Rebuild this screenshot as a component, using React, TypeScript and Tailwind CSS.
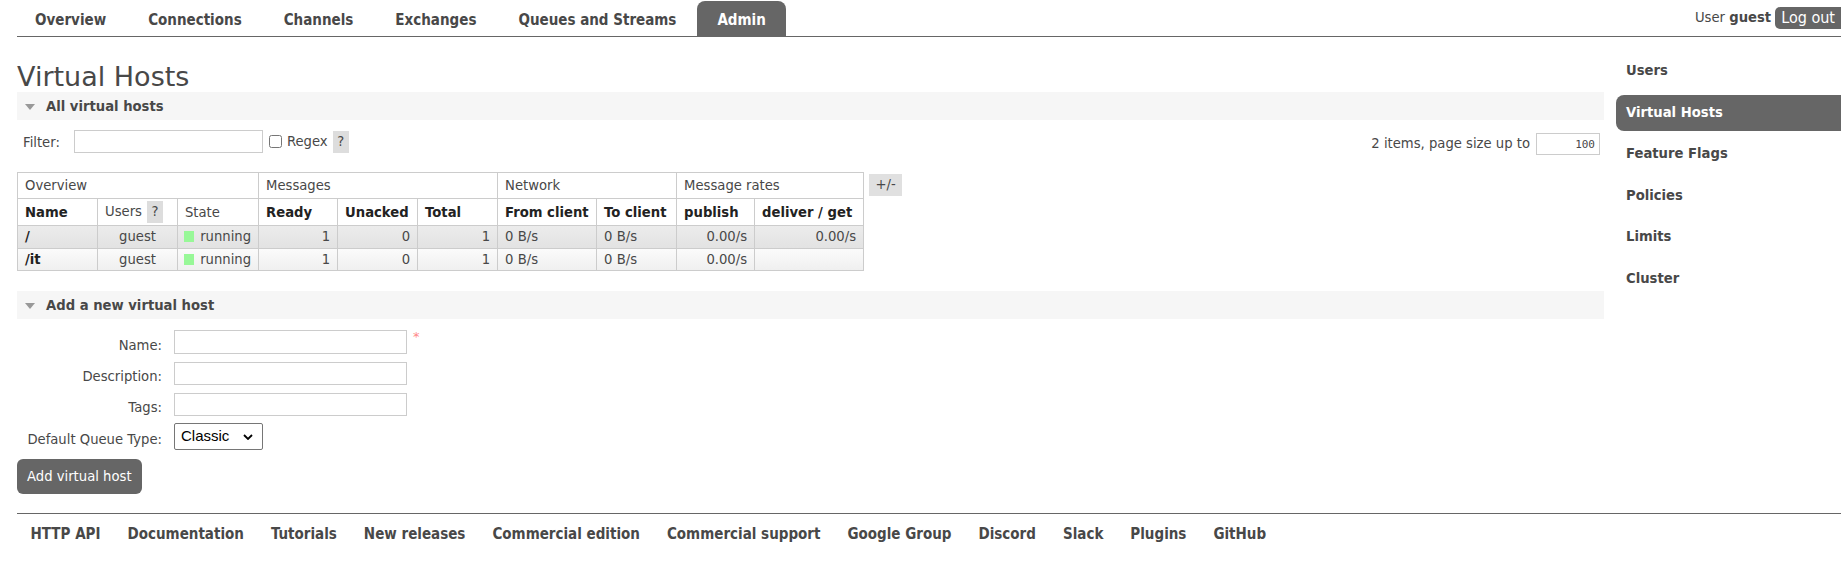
import React from 'react';

const condensed = "font-['DejaVu_Sans_Condensed','Liberation_Sans_Narrow','DejaVu_Sans',sans-serif] font-stretch-condensed";

const navItems = ['Overview', 'Connections', 'Channels', 'Exchanges', 'Queues and Streams', 'Admin'];
const sideItems = ['Users', 'Virtual Hosts', 'Feature Flags', 'Policies', 'Limits', 'Cluster'];
const footerItems = [
  'HTTP API',
  'Documentation',
  'Tutorials',
  'New releases',
  'Commercial edition',
  'Commercial support',
  'Google Group',
  'Discord',
  'Slack',
  'Plugins',
  'GitHub',
];

interface VhostRow {
  name: string;
  users: string;
  ready: number;
  unacked: number;
  total: number;
  fromClient: string;
  toClient: string;
  publish: string;
  deliver: string;
}

const rows: VhostRow[] = [
  { name: '/', users: 'guest', ready: 1, unacked: 0, total: 1, fromClient: '0 B/s', toClient: '0 B/s', publish: '0.00/s', deliver: '0.00/s' },
  { name: '/it', users: 'guest', ready: 1, unacked: 0, total: 1, fromClient: '0 B/s', toClient: '0 B/s', publish: '0.00/s', deliver: '' },
];

function Header() {
  return (
    <div className="ml-[17px] flex h-[37px] items-end justify-between border-b border-[#666] pt-[1px]">
      <ul className={`ml-[-3px] flex h-[35px] items-end ${condensed}`}>
        {navItems.map((item) => (
          <li
            key={item}
            className={
              item === 'Admin'
                ? 'flex h-[35px] items-center rounded-t-[8px] bg-[#666] px-[20px] pt-[4px] text-[15px] font-bold text-white'
                : 'flex h-[35px] items-center px-[21px] pt-[4px] text-[15px] font-bold text-[#484848]'
            }
          >
            {item}
          </li>
        ))}
      </ul>
      <div className="flex items-center self-center pb-[1px]">
        <span>
          User <b>guest</b>
        </span>
        <button className={`ml-[4px] h-[22px] rounded-l-[5px] bg-[#666] px-[6px] text-[16px] leading-[22px] text-white ${condensed}`}>
          Log out
        </button>
      </div>
    </div>
  );
}

function SectionBar({ title }: { title: string }) {
  return (
    <div className="flex h-[28px] items-center bg-[#f6f6f6] pt-[2px]">
      <svg width="10" height="6" viewBox="0 0 10 6" className="ml-[8px] mr-[11px]">
        <path d="M0 0 L10 0 L5 6 Z" fill="#999" />
      </svg>
      <h2 className="font-bold">{title}</h2>
    </div>
  );
}

function HelpBadge() {
  return <span className="inline-flex h-[22px] w-[16px] items-center justify-center bg-[#ddd]">?</span>;
}

function VhostTable() {
  const td = 'border border-[#ccc] px-[7px]';
  return (
    <div className="mt-[17px] flex items-start">
      <table className="w-[846px] table-fixed border-collapse border border-[#ccc]">
        <colgroup>
          <col className="w-[80px]" />
          <col className="w-[80px]" />
          <col className="w-[81px]" />
          <col className="w-[79px]" />
          <col className="w-[80px]" />
          <col className="w-[80px]" />
          <col className="w-[99px]" />
          <col className="w-[80px]" />
          <col className="w-[78px]" />
          <col className="w-[109px]" />
        </colgroup>
        <thead>
          <tr className="h-[26px]">
            <th colSpan={3} className={`${td} text-left font-normal`}>Overview</th>
            <th colSpan={3} className={`${td} text-left font-normal`}>Messages</th>
            <th colSpan={2} className={`${td} text-left font-normal`}>Network</th>
            <th colSpan={2} className={`${td} text-left font-normal`}>Message rates</th>
          </tr>
          <tr className="h-[27px] text-[#222]">
            <th className={`${td} pt-[2px] text-left`}>Name</th>
            <th className={`${td} text-left font-normal text-[#484848]`}>
              <span className="flex items-center gap-[5px]">
                Users <HelpBadge />
              </span>
            </th>
            <th className={`${td} pt-[2px] text-left font-normal text-[#484848]`}>State</th>
            <th className={`${td} pt-[2px] text-left`}>Ready</th>
            <th className={`${td} pt-[2px] text-left`}>Unacked</th>
            <th className={`${td} pt-[2px] text-left`}>Total</th>
            <th className={`${td} pt-[2px] text-left`}>From client</th>
            <th className={`${td} pt-[2px] text-left`}>To client</th>
            <th className={`${td} pt-[2px] text-left`}>publish</th>
            <th className={`${td} pt-[2px] text-left`}>deliver / get</th>
          </tr>
        </thead>
        <tbody>
          {rows.map((r, i) => (
            <tr
              key={r.name}
              className={
                i === 0
                  ? 'h-[23px] bg-gradient-to-b from-[#ececec] to-[#e2e2e2]'
                  : 'h-[22px] bg-gradient-to-b from-[#fbfbfb] to-[#efefef]'
              }
            >
              <td className={`${td} font-bold text-[#222]`}>{r.name}</td>
              <td className={`${td} text-center`}>{r.users}</td>
              <td className={`${td} pl-[6px]`}>
                <span className="flex items-center">
                  <span className="mr-[6px] inline-block h-[11px] w-[11px] bg-[#98f898]" />
                  running
                </span>
              </td>
              <td className={`${td} text-right`}>{r.ready}</td>
              <td className={`${td} text-right`}>{r.unacked}</td>
              <td className={`${td} text-right`}>{r.total}</td>
              <td className={td}>{r.fromClient}</td>
              <td className={td}>{r.toClient}</td>
              <td className={`${td} text-right`}>{r.publish}</td>
              <td className={`${td} text-right`}>{r.deliver}</td>
            </tr>
          ))}
        </tbody>
      </table>
      <span className="ml-[5px] mt-[2px] flex h-[22px] w-[33px] items-center justify-center bg-[#e0e0e0]">+/-</span>
    </div>
  );
}

function FormRow({ label, children, className }: { label: string; children: React.ReactNode; className: string }) {
  return (
    <div className={`flex items-center ${className}`}>
      <label className="w-[145px] pt-[7px] text-right">{label}</label>
      <div className="ml-[12px] flex items-center">{children}</div>
    </div>
  );
}

function AddForm() {
  const input = 'w-[233px] border border-[#ccc] bg-white';
  return (
    <div>
      <FormRow label="Name:" className="mt-[11px] h-[24px]">
        <input className={`${input} h-[24px]`} />
        <span className="ml-[6px] self-start text-[13px] leading-[14px] text-[#f88]">*</span>
      </FormRow>
      <FormRow label="Description:" className="mt-[8px] h-[23px]">
        <input className={`${input} h-[23px]`} />
      </FormRow>
      <FormRow label="Tags:" className="mt-[8px] h-[23px]">
        <input className={`${input} h-[23px]`} />
      </FormRow>
      <FormRow label="Default Queue Type:" className="mt-[7px] h-[27px]">
        <div className="relative">
          <select className="h-[27px] w-[89px] appearance-none rounded-[2px] border border-[#767676] bg-white pl-[6px] font-['Liberation_Sans',Arial,sans-serif] text-[15px] text-black">
            <option>Classic</option>
            <option>Quorum</option>
            <option>Stream</option>
          </select>
          <svg
            width="10"
            height="6"
            viewBox="0 0 10 6"
            className="pointer-events-none absolute right-[10px] top-[11px]"
          >
            <path d="M1 1 L5 5 L9 1" fill="none" stroke="#000" strokeWidth="1.8" />
          </svg>
        </div>
      </FormRow>
      <button className="mt-[9px] h-[35px] rounded-[6px] bg-[#666] px-[10px] text-white">Add virtual host</button>
    </div>
  );
}

function Sidebar() {
  return (
    <ul className="ml-[12px] flex flex-1 flex-col gap-[5.5px] pt-[16px]">
      {sideItems.map((item) => (
        <li
          key={item}
          className={
            item === 'Virtual Hosts'
              ? 'flex h-[36px] items-center rounded-l-[8px] bg-[#666] pl-[10px] font-bold text-white'
              : 'flex h-[36px] items-center pl-[10px] font-bold text-[#484848]'
          }
        >
          {item}
        </li>
      ))}
    </ul>
  );
}

function Footer() {
  return (
    <div className="ml-[17px] mt-[19px] border-t border-[#666] pt-[10px]">
      <ul className={`flex ${condensed}`}>
        {footerItems.map((item) => (
          <li key={item} className="px-[13.5px] text-[15px] font-bold leading-[20px] text-[#484848]">
            {item}
          </li>
        ))}
      </ul>
    </div>
  );
}

export default function App() {
  return (
    <div className="min-h-[566px] w-full bg-white font-['DejaVu_Sans',Verdana,sans-serif] text-[13.2px] text-[#484848]">
      <Header />
      <div className="flex">
        <main className="ml-[17px] w-[1587px] shrink-0">
          <h1 className="mt-[24px] text-[27px] leading-[31px]">Virtual Hosts</h1>
          <SectionBar title="All virtual hosts" />
          <div className="mt-[10px] flex h-[25px] items-start justify-between">
            <div className="flex items-center">
              <span className="ml-[6px] pt-[2px]">Filter:</span>
              <input className="ml-[14px] h-[23px] w-[189px] border border-[#ccc]" />
              <input type="checkbox" className="ml-[6px] h-[13px] w-[13px]" />
              <span className="ml-[5px]">Regex</span>
              <span className="ml-[5px]">
                <HelpBadge />
              </span>
            </div>
            <div className="mr-[4px] mt-[3px] flex items-center">
              <span>2 items, page size up to</span>
              <input
                defaultValue="100"
                className="ml-[6px] h-[22px] w-[64px] border border-[#ccc] pr-[4px] text-right font-['DejaVu_Sans_Mono',monospace] text-[11px]"
              />
            </div>
          </div>
          <VhostTable />
          <div className="mt-[20px]">
            <SectionBar title="Add a new virtual host" />
          </div>
          <AddForm />
        </main>
        <Sidebar />
      </div>
      <Footer />
    </div>
  );
}
